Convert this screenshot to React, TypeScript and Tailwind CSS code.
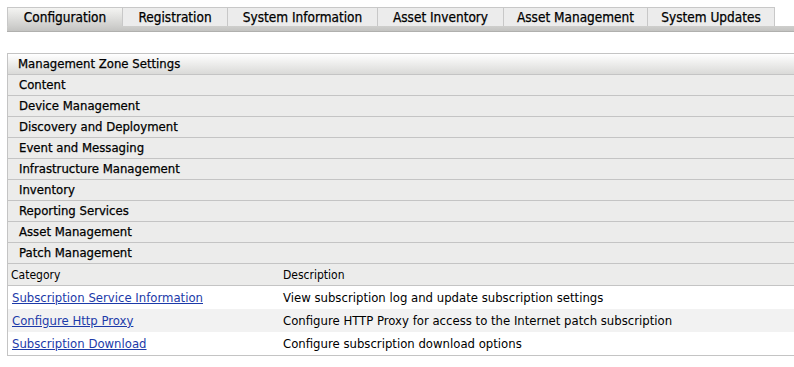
import React from "react";

const tabs = ["Configuration", "Registration", "System Information", "Asset Inventory", "Asset Management", "System Updates"];
const tabW = ["w-[115px]", "w-[105px]", "w-[150px]", "w-[126px]", "w-[144px]", "w-[128px]"];
const sections = ["Content", "Device Management", "Discovery and Deployment", "Event and Messaging", "Infrastructure Management", "Inventory", "Reporting Services", "Asset Management", "Patch Management"];
const rows = [
  ["Subscription Service Information", "View subscription log and update subscription settings"],
  ["Configure Http Proxy", "Configure HTTP Proxy for access to the Internet patch subscription"],
  ["Subscription Download", "Configure subscription download options"],
];

export default function App() {
  return (
    <div className="w-[794px] h-[367px] bg-white overflow-hidden text-black" style={{ fontFamily: '"DejaVu Sans Condensed", "DejaVu Sans", Tahoma, sans-serif' }}>
      <div className="pt-[7px] pl-[7px]">
        <div className="flex">
          {tabs.map((t, i) => (
            <div
              key={t}
              className={`${tabW[i]} h-[19px] flex items-center justify-center text-[13.5px] border-t border-[#c8c8c8] [-webkit-text-stroke:0.25px_black] ${i === 0 ? "bg-gradient-to-b from-[#f4f4f2] to-[#cfcfcd] border-l" : "bg-[#ececec] border-l"} ${i === tabs.length - 1 ? "border-r" : ""}`}
            >
              {t}
            </div>
          ))}
        </div>
        <div className="h-[6px] bg-gradient-to-b from-[#cfcfcd] to-[#c3c3c1] border-b border-[#b0b0ae]" />
      </div>
      <div className="ml-[7px] mt-[21px] border-l border-t border-[#c4c4c4]">
        <div className="h-[21px] flex items-center pl-[10px] text-[13px] bg-gradient-to-b from-[#ffffff] to-[#dadad8] border-b border-[#c4c4c4] [-webkit-text-stroke:0.25px_black]">
          Management Zone Settings
        </div>
        {sections.map((s) => (
          <div key={s} className="h-[21px] flex items-center pl-[11px] text-[13px] bg-[#ececeb] border-b border-[#c4c4c4] [-webkit-text-stroke:0.25px_black]">
            {s}
          </div>
        ))}
        <div className="h-[22px] flex items-center text-[12px] bg-[#ececeb] border-b border-[#c4c4c4]">
          <div className="w-[275px] pl-[3px]">Category</div>
          <div>Description</div>
        </div>
        {rows.map(([a, b], i) => (
          <div key={a} className={`h-[23px] flex items-center text-[13px] ${i === 1 ? "bg-[#f2f2f2]" : "bg-white"}`}>
            <div className="w-[275px] pl-[4px]">
              <a href="#" className="text-[#1c3aa9] underline">{a}</a>
            </div>
            <div>{b}</div>
          </div>
        ))}
        <div className="border-t border-[#c4c4c4]" />
      </div>
    </div>
  );
}
